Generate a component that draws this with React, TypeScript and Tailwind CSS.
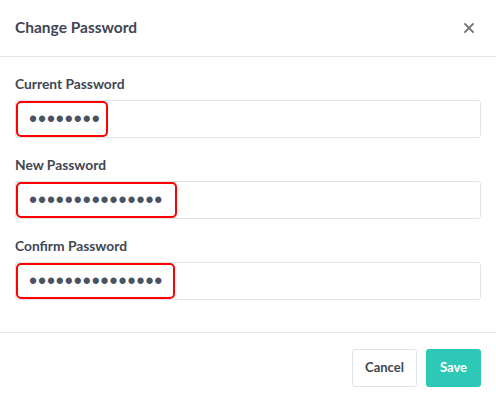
import { X } from "lucide-react";

const fields = [
  { label: "Current Password", value: "password", box: "w-[92px]" },
  { label: "New Password", value: "newpassword1234", box: "w-[161px]" },
  { label: "Confirm Password", value: "newpassword1234", box: "w-[159px]" },
];

export default function App() {
  return (
    <div className="w-[496px] h-[402px] bg-white text-[#3f4654] flex flex-col" style={{ fontFamily: "Lato, 'Open Sans', sans-serif" }}>
      <div className="h-[57px] flex items-center justify-between px-[15px] border-b border-[#e5e7eb]">
        <h2 className="text-[15.5px] font-bold">Change Password</h2>
        <X className="w-4 h-4 text-[#777] mr-[4px]" strokeWidth={2.75} />
      </div>
      <div className="px-[15px] pt-[19px] pb-[32px] border-b border-[#e5e7eb]">
        {fields.map((f, i) => (
          <div key={f.label} className={i > 0 ? "mt-[19px]" : ""}>
            <label className="block text-[13.8px] font-bold leading-4 mb-[8px]">{f.label}</label>
            <div className="relative">
              <input
                type="password"
                readOnly
                value={f.value}
                className="w-full h-[38px] border border-[#dfe3ea] rounded-[3px] pl-[13px] font-['Liberation_Sans',sans-serif] text-[23px] tracking-[0.9px] text-[#4b5261] outline-none"
              />
              <div className={`absolute left-[1px] top-[1px] h-[36px] ${f.box} border-[2.5px] border-[#ff0000] rounded-[5px] pointer-events-none`} />
            </div>
          </div>
        ))}
      </div>
      <div className="flex justify-end gap-[9px] px-[15px] pt-[16px]">
        <button className="h-[38px] px-[12px] border border-[#dfe3ea] rounded-[3px] text-[13px] font-bold text-[#3f4654] bg-white">Cancel</button>
        <button className="h-[38px] px-[14px] rounded-[3px] text-[13px] font-bold text-white bg-[#2ec9b6]">Save</button>
      </div>
    </div>
  );
}
